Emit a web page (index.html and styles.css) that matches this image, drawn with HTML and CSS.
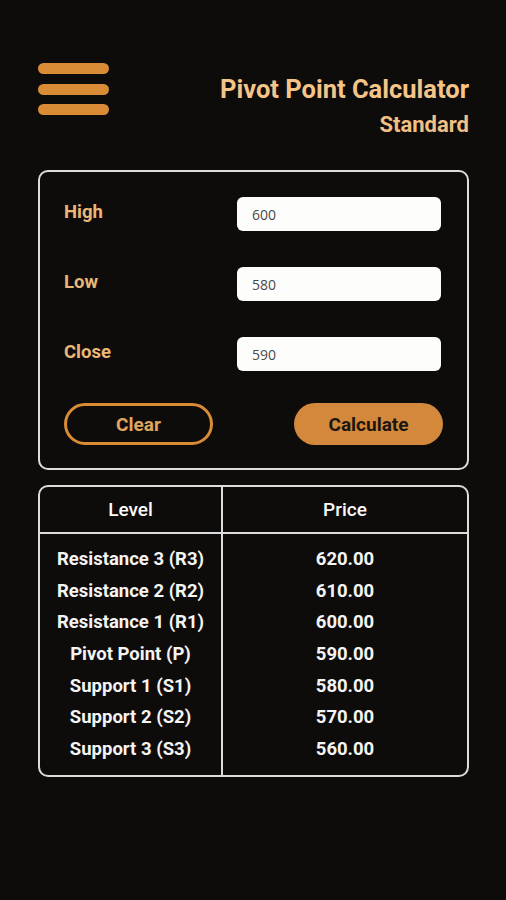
FILE: index.html
```html
<!DOCTYPE html>
<html lang="en">

<head>
	<meta charset="UTF-8">
	<meta name="viewport" content="width=device-width, initial-scale=1.0">
	<title>Pivot Point Calculator</title>
	<link rel="stylesheet" href="styles.css">
</head>

<body>
	<div class="screen">
		<header class="top-bar">
			<button class="menu-btn" aria-label="Menu">
				<span></span>
				<span></span>
				<span></span>
			</button>
			<div class="title-block">
				<h1>Pivot Point Calculator</h1>
				<p class="subtitle">Standard</p>
			</div>
		</header>

		<form class="card calc-form" id="pivotForm">
			<div class="form-row">
				<label for="high">High</label>
				<input type="text" id="high" value="600">
			</div>
			<div class="form-row">
				<label for="low">Low</label>
				<input type="text" id="low" value="580">
			</div>
			<div class="form-row">
				<label for="close">Close</label>
				<input type="text" id="close" value="590">
			</div>
			<div class="actions">
				<button type="button" class="btn btn-outline">Clear</button>
				<button type="submit" class="btn btn-fill">Calculate</button>
			</div>
		</form>

		<div class="card results">
			<div class="results-head">
				<div class="cell col-level">Level</div>
				<div class="cell">Price</div>
			</div>
			<div class="results-body">
				<div class="col col-level">
					<div>Resistance 3 (R3)</div>
					<div>Resistance 2 (R2)</div>
					<div>Resistance 1 (R1)</div>
					<div>Pivot Point (P)</div>
					<div>Support 1 (S1)</div>
					<div>Support 2 (S2)</div>
					<div>Support 3 (S3)</div>
				</div>
				<div class="col">
					<div>620.00</div>
					<div>610.00</div>
					<div>600.00</div>
					<div>590.00</div>
					<div>580.00</div>
					<div>570.00</div>
					<div>560.00</div>
				</div>
			</div>
		</div>
	</div>
</body>

</html>
```

FILE: styles.css
```css
* {
	margin: 0;
	padding: 0;
	box-sizing: border-box;
	font-family: Roboto, 'Liberation Sans', sans-serif;
}

body {
	background: #0e0c0a;
	min-height: 100vh;
}

.screen {
	padding: 63px 37px 0 38px;
}

.top-bar {
	display: flex;
	justify-content: space-between;
	align-items: flex-start;
	height: 107px;
}

.menu-btn {
	display: flex;
	flex-direction: column;
	gap: 9.5px;
	background: none;
	border: none;
	cursor: pointer;
}

.menu-btn span {
	display: block;
	width: 71px;
	height: 11px;
	border-radius: 6px;
	background: #d98b35;
}

.title-block {
	text-align: right;
	padding-top: 12px;
}

h1 {
	color: #f4c489;
	font-size: 25.5px;
	font-weight: 700;
	line-height: 29px;
}

.subtitle {
	color: #f0c085;
	font-size: 22px;
	font-weight: 700;
	line-height: 26px;
	margin-top: 8px;
}

.card {
	border: 2px solid #dcdcdc;
	border-radius: 10px;
}

.calc-form {
	padding: 25px 26px 23px 24px;
}

.form-row {
	display: flex;
	justify-content: space-between;
	align-items: center;
	margin-bottom: 36px;
}

.form-row:nth-child(3) {
	margin-bottom: 32px;
}

label {
	color: #e9b877;
	font-size: 18.5px;
	font-weight: 700;
	padding-bottom: 4px;
}

input {
	width: 204px;
	height: 34px;
	border: none;
	border-radius: 6px;
	background: #fdfdfb;
	padding: 0 15px;
	font-family: 'Open Sans', sans-serif;
	font-size: 14px;
	color: #4a4a4a;
}

input:focus {
	outline: none;
}

.actions {
	display: flex;
	justify-content: space-between;
	margin-right: -2px;
}

.btn {
	width: 149px;
	height: 42px;
	border-radius: 21px;
	font-size: 19px;
	font-weight: 700;
	cursor: pointer;
}

.btn-outline {
	background: none;
	border: 3px solid #d98b35;
	color: #e0a560;
}

.btn-fill {
	background: #d4883b;
	border: none;
	color: #1c1510;
}

.results {
	margin-top: 15px;
	color: #f4f4f4;
	font-size: 18.5px;
	font-weight: 700;
	text-align: center;
}

.results-head {
	display: grid;
	grid-template-columns: 183px 1fr;
	border-bottom: 2px solid #dcdcdc;
}

.results-head .cell {
	height: 45px;
	line-height: 46px;
	font-size: 19px;
	font-weight: 500;
	color: #fafafa;
}

.results-body {
	display: grid;
	grid-template-columns: 183px 1fr;
}

.col {
	padding: 10px 0 9px;
}

.col div {
	height: 31.7px;
	line-height: 31.7px;
}

.col-level {
	border-right: 2px solid #dcdcdc;
}
```
